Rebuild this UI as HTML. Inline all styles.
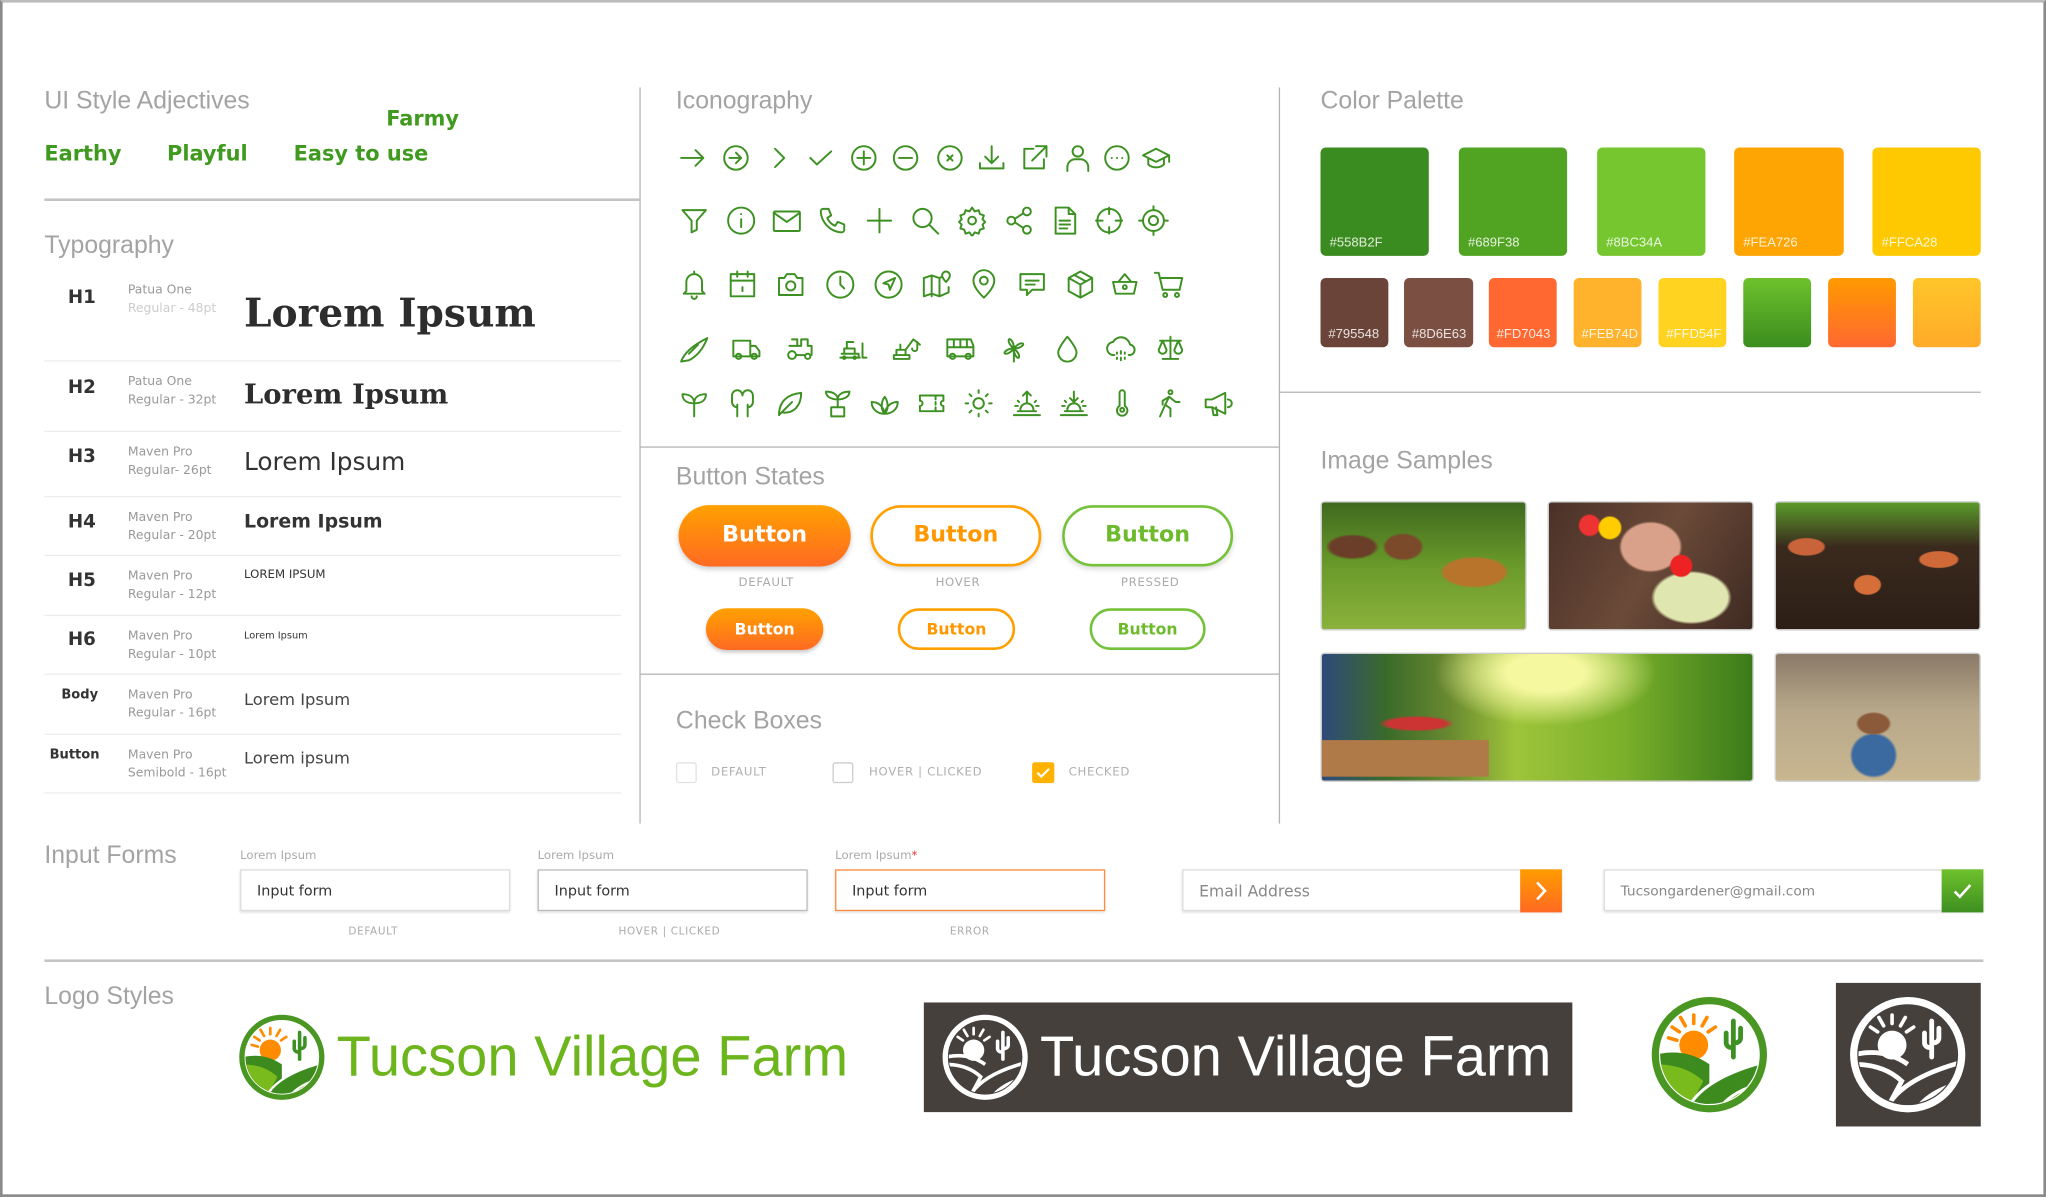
<!DOCTYPE html>
<html><head><meta charset="utf-8">
<style>
*{margin:0;padding:0;box-sizing:border-box}
html,body{width:2046px;height:1197px;overflow:hidden;background:#fff}
#w{position:absolute;left:0;top:0;width:1568px;height:917px;transform:scale(1.30485,1.3053);transform-origin:0 0;font-family:"DejaVu Sans","Liberation Sans",sans-serif}
#fr{position:absolute;left:0;top:0;width:1568px;height:917px;border:2px solid #8a8a8a;border-top-color:#bbb}
.a{position:absolute;white-space:nowrap}
.t{font-family:"Liberation Sans",sans-serif;color:#a3a3a3;font-size:19px}
.adj{font-weight:bold;color:#3f9a1f;font-size:16px}
.hl{position:absolute;background:#b5b5b5;height:1px}
.vl{position:absolute;background:#b5b5b5;width:1px}
.rl{position:absolute;left:34px;width:442px;height:1px;background:#ececec}
.lab{font-weight:bold;color:#333;font-size:14px}
.meta{font-size:9.5px;color:#999;line-height:14px}
.ic{position:absolute;width:24px;height:24px;fill:none;stroke:#3d9122;stroke-width:1.5;stroke-linecap:round;stroke-linejoin:round}
.btn{position:absolute;border-radius:30px;font-weight:bold;text-align:center;font-family:"DejaVu Sans",sans-serif}
.cap{position:absolute;font-size:9px;color:#aaa;letter-spacing:.5px}
.sw{position:absolute;border-radius:4px;color:rgba(255,255,255,.85);font-size:10px;font-family:"Liberation Sans",sans-serif}
.sw span{position:absolute;left:7px;bottom:4px}
.img{position:absolute;border-radius:3px;border:1px solid #ccc}
.inp{position:absolute;height:32px;border:1px solid #ddd;box-shadow:0 1px 2px #ddd;font-size:11px;color:#333;padding-left:12px;line-height:32px;background:#fff}
.il{position:absolute;font-size:9px;color:#aaa}
.lt{position:absolute;white-space:nowrap;font-family:"Liberation Sans",sans-serif;font-size:43px;line-height:56px}
</style></head><body><div id="w">
<div id="fr"></div>
<svg width="0" height="0" style="position:absolute">
<defs>
<clipPath id="cc"><circle cx="50" cy="50" r="41"/></clipPath>
<symbol id="lg" viewBox="0 0 100 100">
<circle cx="50" cy="50" r="45" fill="#fff" stroke="#4a9622" stroke-width="6"/>
<g clip-path="url(#cc)">
<g stroke="#ff8c00" stroke-width="3" stroke-linecap="round"><line x1="37" y1="24" x2="37" y2="17"/><line x1="30" y1="26" x2="26" y2="19"/><line x1="44" y1="26" x2="48" y2="19"/><line x1="25" y1="31" x2="19" y2="27"/><line x1="49" y1="31" x2="55" y2="27"/><line x1="23" y1="38" x2="16" y2="36"/></g>
<circle cx="37" cy="42" r="12" fill="#ff8c00"/>
<path d="M70 22v30M64 32v8a4 4 0 004 4h2M76 28v8a4 4 0 01-4 4h-2" stroke="#3d9122" stroke-width="4" fill="none" stroke-linecap="round"/>
<path d="M5 50q25-6 45 8v50H5z" fill="#3d8a1e"/>
<path d="M5 58q25 0 40 14L30 100H5z" fill="#79bb1c"/>
<path d="M30 100q10-30 70-45v50z" fill="#3d8a1e" stroke="#fff" stroke-width="2.5"/>
<path d="M55 100q10-20 45-28v30z" fill="#79bb1c" stroke="#fff" stroke-width="2.5"/>
</g>
</symbol>
<symbol id="lw" viewBox="0 0 100 100">
<circle cx="50" cy="50" r="45" fill="none" stroke="#fff" stroke-width="6"/>
<g clip-path="url(#cc)" fill="none" stroke="#fff">
<g stroke-width="3" stroke-linecap="round"><line x1="37" y1="24" x2="37" y2="17"/><line x1="30" y1="26" x2="26" y2="19"/><line x1="44" y1="26" x2="48" y2="19"/><line x1="25" y1="31" x2="19" y2="27"/><line x1="49" y1="31" x2="55" y2="27"/></g>
<circle cx="37" cy="42" r="12" fill="#fff" stroke="none"/>
<path d="M70 22v30M64 32v8a4 4 0 004 4h2M76 28v8a4 4 0 01-4 4h-2" stroke-width="4" stroke-linecap="round"/>
<path d="M5 50q25-6 45 8M5 58q25 0 40 14L30 100M30 100q10-30 70-45M55 100q10-20 45-28" stroke-width="4"/>
</g>
</symbol>
</defs></svg>

<div class="a t" style="left:34px;top:67px">UI Style Adjectives</div>
<div class="a adj" style="left:296px;top:81px">Farmy</div>
<div class="a adj" style="left:34px;top:108px">Earthy</div>
<div class="a adj" style="left:128px;top:108px">Playful</div>
<div class="a adj" style="left:225px;top:108px">Easy to use</div>
<div class="hl" style="left:34px;top:152px;width:456px;height:2px;background:#c4c4c4"></div>
<div class="vl" style="left:490px;top:67px;height:564px"></div>
<div class="vl" style="left:980px;top:67px;height:564px"></div>

<div class="a t" style="left:34px;top:178px">Typography</div>
<div class="a lab" style="left:52px;top:220px">H1</div>
<div class="a meta" style="left:98px;top:216px">Patua One<br><span style="color:#ccc">Regular - 48pt</span></div>
<div class="a" style="left:187px;top:223px;font-family:'DejaVu Serif','Liberation Serif',serif;font-weight:bold;font-size:30px;color:#2d2d2d">Lorem Ipsum</div>
<div class="rl" style="top:276px"></div>
<div class="a lab" style="left:52px;top:289px">H2</div>
<div class="a meta" style="left:98px;top:286px">Patua One<br>Regular - 32pt</div>
<div class="a" style="left:187px;top:289px;font-family:'DejaVu Serif','Liberation Serif',serif;font-weight:bold;font-size:21px;color:#2d2d2d">Lorem Ipsum</div>
<div class="rl" style="top:330px"></div>
<div class="a lab" style="left:52px;top:342px">H3</div>
<div class="a meta" style="left:98px;top:340px">Maven Pro<br>Regular- 26pt</div>
<div class="a" style="left:187px;top:343px;font-size:19px;color:#333">Lorem Ipsum</div>
<div class="rl" style="top:380px"></div>
<div class="a lab" style="left:52px;top:392px">H4</div>
<div class="a meta" style="left:98px;top:390px">Maven Pro<br>Regular - 20pt</div>
<div class="a" style="left:187px;top:392px;font-size:14.5px;font-weight:bold;color:#333">Lorem Ipsum</div>
<div class="rl" style="top:425px"></div>
<div class="a lab" style="left:52px;top:437px">H5</div>
<div class="a meta" style="left:98px;top:435px">Maven Pro<br>Regular - 12pt</div>
<div class="a" style="left:187px;top:436px;font-size:9px;color:#333">LOREM IPSUM</div>
<div class="rl" style="top:471px"></div>
<div class="a lab" style="left:52px;top:482px">H6</div>
<div class="a meta" style="left:98px;top:481px">Maven Pro<br>Regular - 10pt</div>
<div class="a" style="left:187px;top:482px;font-size:7.5px;color:#333">Lorem Ipsum</div>
<div class="rl" style="top:516px"></div>
<div class="a lab" style="left:47px;top:527px;font-size:10px">Body</div>
<div class="a meta" style="left:98px;top:526px">Maven Pro<br>Regular - 16pt</div>
<div class="a" style="left:187px;top:528px;font-size:12.5px;color:#444">Lorem Ipsum</div>
<div class="rl" style="top:562px"></div>
<div class="a lab" style="left:38px;top:573px;font-size:10px">Button</div>
<div class="a meta" style="left:98px;top:572px">Maven Pro<br>Semibold - 16pt</div>
<div class="a" style="left:187px;top:573px;font-size:12.5px;color:#444">Lorem ipsum</div>
<div class="rl" style="top:607px"></div>

<div class="a t" style="left:518px;top:67px">Iconography</div>
<svg class="ic" style="left:519px;top:109px" viewBox="0 0 24 24"><path d="M3 12h17M14 6l6 6-6 6"/></svg>
<svg class="ic" style="left:552px;top:109px" viewBox="0 0 24 24"><circle cx="12" cy="12" r="9"/><path d="M7 12h9M12 8l4 4-4 4"/></svg>
<svg class="ic" style="left:585px;top:109px" viewBox="0 0 24 24"><path d="M9 5l7 7-7 7"/></svg>
<svg class="ic" style="left:617px;top:109px" viewBox="0 0 24 24"><path d="M4 12l5 5 11-10"/></svg>
<svg class="ic" style="left:650px;top:109px" viewBox="0 0 24 24"><circle cx="12" cy="12" r="9"/><path d="M12 7v10M7 12h10"/></svg>
<svg class="ic" style="left:682px;top:109px" viewBox="0 0 24 24"><circle cx="12" cy="12" r="9"/><path d="M7 12h10"/></svg>
<svg class="ic" style="left:716px;top:109px" viewBox="0 0 24 24"><circle cx="12" cy="12" r="9"/><path d="M10 10l4 4M14 10l-4 4"/></svg>
<svg class="ic" style="left:748px;top:109px" viewBox="0 0 24 24"><path d="M12 3v13M7 11l5 5 5-5M3 16v4h18v-4"/></svg>
<svg class="ic" style="left:781px;top:109px" viewBox="0 0 24 24"><path d="M11 5H4v15h15v-7M13 3h8v8M21 3L10 14"/></svg>
<svg class="ic" style="left:814px;top:109px" viewBox="0 0 24 24"><circle cx="12" cy="7" r="4"/><path d="M4 22v-3a6 6 0 016-6h4a6 6 0 016 6v3"/></svg>
<svg class="ic" style="left:844px;top:109px" viewBox="0 0 24 24"><circle cx="12" cy="12" r="9"/><path d="M8 12h.1M12 12h.1M16 12h.1"/></svg>
<svg class="ic" style="left:874px;top:109px" viewBox="0 0 24 24"><path d="M2 10l10-5 10 5-10 5zM6 12v5c3 3 9 3 12 0v-5M22 10v5"/></svg>
<svg class="ic" style="left:520px;top:157px" viewBox="0 0 24 24"><path d="M3 4h18l-7 8v7l-4 2v-9z"/></svg>
<svg class="ic" style="left:556px;top:157px" viewBox="0 0 24 24"><circle cx="12" cy="12" r="10"/><path d="M12 11v6M12 7v.1"/></svg>
<svg class="ic" style="left:591px;top:157px" viewBox="0 0 24 24"><rect x="2" y="5" width="20" height="15" rx="1"/><path d="M2 6l10 7 10-7"/></svg>
<svg class="ic" style="left:626px;top:157px" viewBox="0 0 24 24"><path d="M5 3h4l2 5-3 2a11 11 0 006 6l2-3 5 2v4a2 2 0 01-2 2A17 17 0 013 5a2 2 0 012-2z"/></svg>
<svg class="ic" style="left:662px;top:157px" viewBox="0 0 24 24"><path d="M12 3v18M3 12h18"/></svg>
<svg class="ic" style="left:697px;top:157px" viewBox="0 0 24 24"><circle cx="10" cy="10" r="7"/><path d="M15 15l7 7"/></svg>
<svg class="ic" style="left:733px;top:157px" viewBox="0 0 24 24"><circle cx="12" cy="12" r="3"/><path d="M12 2l2 3 3-1 1 3 3 1-1 3 2 2-2 2 1 3-3 1-1 3-3-1-2 3-2-3-3 1-1-3-3-1 1-3-2-2 2-2-1-3 3-1 1-3 3 1z"/></svg>
<svg class="ic" style="left:769px;top:157px" viewBox="0 0 24 24"><circle cx="18" cy="5" r="3"/><circle cx="6" cy="12" r="3"/><circle cx="18" cy="19" r="3"/><path d="M9 10.5l6-4M9 13.5l6 4"/></svg>
<svg class="ic" style="left:804px;top:157px" viewBox="0 0 24 24"><path d="M5 2h10l5 5v15H5zM15 2v5h5M8 12h8M8 15h8M8 18h6"/></svg>
<svg class="ic" style="left:838px;top:157px" viewBox="0 0 24 24"><circle cx="12" cy="12" r="9"/><path d="M12 2v5M12 17v5M2 12h5M17 12h5"/></svg>
<svg class="ic" style="left:872px;top:157px" viewBox="0 0 24 24"><circle cx="12" cy="12" r="8"/><circle cx="12" cy="12" r="3.5"/><path d="M12 1v3M12 20v3M1 12h3M20 12h3"/></svg>
<svg class="ic" style="left:520px;top:206px" viewBox="0 0 24 24"><path d="M6 17V10a6 6 0 0112 0v7l2 2H4zM10 21a2 2 0 004 0M12 2v2"/></svg>
<svg class="ic" style="left:557px;top:206px" viewBox="0 0 24 24"><rect x="3" y="4" width="18" height="17"/><path d="M3 9h18M8 2v4M16 2v4M12 14v3"/></svg>
<svg class="ic" style="left:594px;top:206px" viewBox="0 0 24 24"><path d="M3 7h4l2-3h6l2 3h4v13H3z"/><circle cx="12" cy="13" r="3.5"/></svg>
<svg class="ic" style="left:632px;top:206px" viewBox="0 0 24 24"><circle cx="12" cy="12" r="10"/><path d="M12 6v6l3 3"/></svg>
<svg class="ic" style="left:669px;top:206px" viewBox="0 0 24 24"><circle cx="12" cy="12" r="10"/><path d="M17 7l-9 4 4 1 1 4z"/></svg>
<svg class="ic" style="left:706px;top:206px" viewBox="0 0 24 24"><path d="M2 7l6-2 6 2 2-1M8 5v16M14 7v14M2 7v14l6-2 6 2 7-3v-4"/><path d="M19 2a3 3 0 013 3c0 2-3 5-3 5s-3-3-3-5a3 3 0 013-3z"/></svg>
<svg class="ic" style="left:742px;top:206px" viewBox="0 0 24 24"><path d="M12 22s8-7 8-13a8 8 0 00-16 0c0 6 8 13 8 13z"/><circle cx="12" cy="9" r="3"/></svg>
<svg class="ic" style="left:779px;top:206px" viewBox="0 0 24 24"><path d="M3 4h18v12h-9l-4 4v-4H3zM7 9h10M7 12h7"/></svg>
<svg class="ic" style="left:816px;top:206px" viewBox="0 0 24 24"><path d="M12 2l9 5v10l-9 5-9-5V7zM3 7l9 5 9-5M12 12v10M7 4.5l9 5"/></svg>
<svg class="ic" style="left:850px;top:206px" viewBox="0 0 24 24"><path d="M3 10h18l-2 9H5zM7 10l5-6 5 6"/><circle cx="12" cy="14" r="1.5"/></svg>
<svg class="ic" style="left:884px;top:206px" viewBox="0 0 24 24"><path d="M1 3h3l3 13h13l2-9H6"/><circle cx="9" cy="20" r="1.5"/><circle cx="18" cy="20" r="1.5"/></svg>
<svg class="ic" style="left:520px;top:255px" viewBox="0 0 24 24"><path d="M2 22c2-6 8-12 20-18-3 8-8 14-14 17zM8 16l7-7"/></svg>
<svg class="ic" style="left:560px;top:255px" viewBox="0 0 24 24"><path d="M2 6h13v12H2zM15 10h4l3 4v4h-7"/><circle cx="6" cy="18" r="2"/><circle cx="18" cy="18" r="2"/></svg>
<svg class="ic" style="left:601px;top:255px" viewBox="0 0 24 24"><path d="M4 10h9V5h5v5h3v7M6 5h4v5"/><circle cx="6" cy="17" r="3"/><circle cx="18" cy="18" r="2"/><path d="M9 17h7"/></svg>
<svg class="ic" style="left:642px;top:255px" viewBox="0 0 24 24"><path d="M2 19h15M3 16h13v3M5 16v-4h8v4M7 12V7h5M19 8v11h3"/><circle cx="5" cy="19" r="1"/><circle cx="13" cy="19" r="1"/></svg>
<svg class="ic" style="left:683px;top:255px" viewBox="0 0 24 24"><path d="M2 20h12v-3H2zM4 17v-4h7v4M7 13V9M11 13l6-8 5 4M20 7v5a2 2 0 01-4 0"/></svg>
<svg class="ic" style="left:724px;top:255px" viewBox="0 0 24 24"><path d="M2 5h18l2 5v8H2zM2 11h20M7 5v6M12 5v6M17 5v6"/><circle cx="6" cy="18" r="2"/><circle cx="18" cy="18" r="2"/></svg>
<svg class="ic" style="left:765px;top:255px" viewBox="0 0 24 24"><path d="M12 12C12 6 8 3 8 6s4 6 4 6c6 0 9-4 6-4s-6 4-6 4c0 6 4 9 4 6s-4-6-4-6c-6 0-9 4-6 4s6-4 6-4zM12 12v10"/></svg>
<svg class="ic" style="left:806px;top:255px" viewBox="0 0 24 24"><path d="M12 3s-7 8-7 12a7 7 0 0014 0c0-4-7-12-7-12z"/></svg>
<svg class="ic" style="left:847px;top:255px" viewBox="0 0 24 24"><path d="M7 17a5 5 0 01-1-10 7 7 0 0113 2 4 4 0 01-1 8M12 14v2M12 19v2M9 15v1M15 15v1M9 19v1M15 19v1"/></svg>
<svg class="ic" style="left:885px;top:255px" viewBox="0 0 24 24"><path d="M12 3v17M6 20h12M4 6h16M6 6l-3 7a3 3 0 006 0zM18 6l-3 7a3 3 0 006 0z"/></svg>
<svg class="ic" style="left:520px;top:297px" viewBox="0 0 24 24"><path d="M12 22V12M12 12C12 7 8 5 3 5c0 5 4 7 9 7zM12 12c0-5 4-7 9-7 0 5-4 7-9 7z"/></svg>
<svg class="ic" style="left:557px;top:297px" viewBox="0 0 24 24"><path d="M8 22V13M16 22V13M8 15a4 4 0 01-4-4V6a4 4 0 018 0M12 6a4 4 0 018 0v5a4 4 0 01-4 4"/></svg>
<svg class="ic" style="left:593px;top:297px" viewBox="0 0 24 24"><path d="M4 21c0-10 6-16 17-17 0 10-6 16-14 15M4 21l10-10"/></svg>
<svg class="ic" style="left:630px;top:297px" viewBox="0 0 24 24"><path d="M7 15h10v7H7zM12 15V9M12 9C12 5 8 3 3 3c0 4 4 6 9 6zM12 9c0-4 4-6 9-6 0 4-4 6-9 6z"/></svg>
<svg class="ic" style="left:666px;top:297px" viewBox="0 0 24 24"><path d="M12 20c-5 0-10-3-10-9 5 0 9 3 10 9zM12 20c5 0 10-3 10-9-5 0-9 3-10 9zM12 20c-3-3-3-9 0-13 3 4 3 10 0 13z"/></svg>
<svg class="ic" style="left:702px;top:297px" viewBox="0 0 24 24"><path d="M3 6h18v4a2 2 0 000 4v4H3v-4a2 2 0 000-4zM15 6v3M15 11v2M15 15v3"/></svg>
<svg class="ic" style="left:738px;top:297px" viewBox="0 0 24 24"><circle cx="12" cy="12" r="4"/><path d="M12 2v2M12 20v2M2 12h2M20 12h2M5 5l1.5 1.5M17.5 17.5L19 19M5 19l1.5-1.5M17.5 6.5L19 5"/></svg>
<svg class="ic" style="left:775px;top:297px" viewBox="0 0 24 24"><path d="M2 21h20M5 18h14M7 17a5 5 0 0110 0M12 3v8M9 6l3-3 3 3M3 14h2M19 14h2M5 10l1 1M19 10l-1 1"/></svg>
<svg class="ic" style="left:811px;top:297px" viewBox="0 0 24 24"><path d="M2 21h20M5 18h14M7 17a5 5 0 0110 0M12 3v8M9 8l3 3 3-3M3 14h2M19 14h2M5 10l1 1M19 10l-1 1"/></svg>
<svg class="ic" style="left:848px;top:297px" viewBox="0 0 24 24"><path d="M10 14V4a2 2 0 014 0v10a4 4 0 11-4 0z"/><circle cx="12" cy="17" r="1.5"/></svg>
<svg class="ic" style="left:884px;top:297px" viewBox="0 0 24 24"><circle cx="13" cy="3.5" r="1.5"/><path d="M12 7l-3 6 4 3v6M12 7l5 4h3M9 13l-4 9M12 7l-5 3v3"/></svg>
<svg class="ic" style="left:921px;top:297px" viewBox="0 0 24 24"><path d="M3 9h5l10-5v16L8 15H3zM8 15l1 6h3l-1-6M20 9a3 3 0 010 6"/></svg>

<div class="hl" style="left:490px;top:342px;width:490px"></div>
<div class="a t" style="left:518px;top:355px">Button States</div>
<div class="btn" style="left:520px;top:387px;width:132px;height:47px;line-height:47px;font-size:17px;color:#fff;background:linear-gradient(#ffa100,#ff6a22);box-shadow:0 2px 4px rgba(0,0,0,.2)">Button</div>
<div class="btn" style="left:667px;top:387px;width:131px;height:47px;line-height:43px;font-size:17px;color:#ff9800;border:2px solid #ffa000;box-shadow:0 2px 4px rgba(0,0,0,.15)">Button</div>
<div class="btn" style="left:814px;top:387px;width:131px;height:47px;line-height:43px;font-size:17px;color:#6dbb2d;border:2px solid #75c23a;box-shadow:0 2px 4px rgba(0,0,0,.15)">Button</div>
<div class="cap" style="left:566px;top:442px">DEFAULT</div>
<div class="cap" style="left:717px;top:442px">HOVER</div>
<div class="cap" style="left:859px;top:442px">PRESSED</div>
<div class="btn" style="left:541px;top:466px;width:90px;height:32px;line-height:32px;font-size:12px;color:#fff;background:linear-gradient(#ffa100,#ff6a22);box-shadow:0 2px 3px rgba(0,0,0,.2)">Button</div>
<div class="btn" style="left:688px;top:466px;width:90px;height:32px;line-height:28px;font-size:12px;color:#ff9800;border:2px solid #ffa000">Button</div>
<div class="btn" style="left:835px;top:466px;width:89px;height:32px;line-height:28px;font-size:12px;color:#6dbb2d;border:2px solid #75c23a">Button</div>

<div class="hl" style="left:490px;top:516px;width:490px"></div>
<div class="a t" style="left:518px;top:542px">Check Boxes</div>
<div class="a" style="left:518px;top:584px;width:16px;height:16px;border:1px solid #e2e2e2;border-radius:2px"></div>
<div class="cap" style="left:545px;top:587px;color:#b0b0b0">DEFAULT</div>
<div class="a" style="left:638px;top:584px;width:16px;height:16px;border:1px solid #ccc;border-radius:2px"></div>
<div class="cap" style="left:666px;top:587px;color:#b0b0b0">HOVER | CLICKED</div>
<div class="a" style="left:791px;top:584px;width:17px;height:16px;background:#ffb300;border-radius:2px"><svg width="17" height="16" viewBox="0 0 17 16"><path d="M4 8l3 3 6-6" stroke="#fff" stroke-width="1.6" fill="none"/></svg></div>
<div class="cap" style="left:819px;top:587px;color:#b0b0b0">CHECKED</div>

<div class="a t" style="left:1012px;top:67px">Color Palette</div>
<div class="sw" style="left:1012px;top:113px;width:83px;height:83px;background:#3b8c20"><span>#558B2F</span></div>
<div class="sw" style="left:1118px;top:113px;width:83px;height:83px;background:#51a322"><span>#689F38</span></div>
<div class="sw" style="left:1224px;top:113px;width:83px;height:83px;background:#76c62f"><span>#8BC34A</span></div>
<div class="sw" style="left:1329px;top:113px;width:84px;height:83px;background:#ffa503"><span>#FEA726</span></div>
<div class="sw" style="left:1435px;top:113px;width:83px;height:83px;background:#ffc901"><span>#FFCA28</span></div>
<div class="sw" style="left:1012px;top:213px;width:52px;height:53px;background:#6b4439"><span style="left:6px">#795548</span></div>
<div class="sw" style="left:1076px;top:213px;width:53px;height:53px;background:#7b4f41"><span style="left:6px">#8D6E63</span></div>
<div class="sw" style="left:1141px;top:213px;width:52px;height:53px;background:#ff6831"><span style="left:6px">#FD7043</span></div>
<div class="sw" style="left:1206px;top:213px;width:52px;height:53px;background:#ffb22b"><span style="left:6px">#FEB74D</span></div>
<div class="sw" style="left:1271px;top:213px;width:52px;height:53px;background:#ffd320"><span style="left:6px">#FFD54F</span></div>
<div class="sw" style="left:1336px;top:213px;width:52px;height:53px;background:linear-gradient(#6ec12c,#3b8d1f)"></div>
<div class="sw" style="left:1401px;top:213px;width:52px;height:53px;background:linear-gradient(#ff9a00,#ff6830)"></div>
<div class="sw" style="left:1466px;top:213px;width:52px;height:53px;background:linear-gradient(#ffc62a,#ffab28)"></div>
<div class="hl" style="left:980px;top:300px;width:538px"></div>

<div class="a t" style="left:1012px;top:343px">Image Samples</div>
<div class="img" style="left:1012px;top:384px;width:158px;height:99px;background:radial-gradient(ellipse at 75% 55%,#b8742a 0 14%,transparent 16%),radial-gradient(ellipse at 40% 35%,#7a4a2a 0 10%,transparent 12%),radial-gradient(ellipse at 15% 35%,#6a3e28 0 9%,transparent 11%),linear-gradient(#3f6a1f,#6a9a2a 50%,#8ab23c)"></div>
<div class="img" style="left:1186px;top:384px;width:158px;height:99px;background:radial-gradient(circle at 30% 20%,#ffcc00 0 6%,transparent 7%),radial-gradient(circle at 20% 18%,#e33 0 5%,transparent 6%),radial-gradient(circle at 65% 50%,#e22 0 7%,transparent 8%),radial-gradient(ellipse at 70% 75%,#dfe6b0 0 18%,transparent 20%),radial-gradient(ellipse at 50% 35%,#d9a08a 0 20%,transparent 22%),linear-gradient(120deg,#4a3128,#6b4a38 50%,#3e2a22)"></div>
<div class="img" style="left:1360px;top:384px;width:158px;height:99px;background:radial-gradient(ellipse at 45% 65%,#d66e3a 0 8%,transparent 9%),radial-gradient(ellipse at 80% 45%,#cf6a38 0 8%,transparent 9%),radial-gradient(ellipse at 15% 35%,#c9643a 0 7%,transparent 8%),linear-gradient(#5b9a2a,#3a2a1e 35%,#2c1e16)"></div>
<div class="img" style="left:1012px;top:500px;width:332px;height:99px;background:radial-gradient(ellipse at 22% 55%,#c33 0 6%,transparent 8%),radial-gradient(ellipse at 52% 15%,#f6f8a0 0 12%,transparent 35%),linear-gradient(90deg,#2e4a7a 0,#3a6a2a 15%,#6a8a30 30%,#9ec43a 45%,#7ab02a 70%,#3a7a1a)"></div>
<div class="a" style="left:1013px;top:567px;width:128px;height:28px;background:#b07a48"></div>
<div class="img" style="left:1360px;top:500px;width:158px;height:99px;background:radial-gradient(ellipse at 48% 55%,#8a5a3a 0 10%,transparent 12%),radial-gradient(ellipse at 48% 80%,#3a6aa0 0 14%,transparent 16%),linear-gradient(#8a7a68,#b8a88a 45%,#c8b690)"></div>

<div class="a t" style="left:34px;top:645px">Input Forms</div>
<div class="il" style="left:184px;top:651px">Lorem Ipsum</div>
<div class="il" style="left:412px;top:651px">Lorem Ipsum</div>
<div class="il" style="left:640px;top:651px">Lorem Ipsum<span style="color:#e33">*</span></div>
<div class="inp" style="left:184px;top:666px;width:207px">Input form</div>
<div class="inp" style="left:412px;top:666px;width:207px;border-color:#bbb">Input form</div>
<div class="inp" style="left:640px;top:666px;width:207px;border-color:#ff8a3a">Input form</div>
<div class="cap" style="left:267px;top:709px;font-size:8px">DEFAULT</div>
<div class="cap" style="left:474px;top:709px;font-size:8px">HOVER | CLICKED</div>
<div class="cap" style="left:728px;top:709px;font-size:8px">ERROR</div>
<div class="inp" style="left:906px;top:666px;width:291px;color:#888;font-size:12px">Email Address</div>
<div class="a" style="left:1165px;top:666px;width:32px;height:33px;background:linear-gradient(#ff9c00,#ff6a22)"><svg width="32" height="33" viewBox="0 0 32 33"><path d="M13 10l6 6.5-6 6.5" stroke="#fff" stroke-width="2" fill="none"/></svg></div>
<div class="inp" style="left:1229px;top:666px;width:291px;color:#888;font-size:10.5px">Tucsongardener@gmail.com</div>
<div class="a" style="left:1488px;top:666px;width:32px;height:33px;background:linear-gradient(#6fc12c,#3d8f20)"><svg width="32" height="33" viewBox="0 0 32 33"><path d="M10 17l4 4 8-9" stroke="#fff" stroke-width="2" fill="none"/></svg></div>
<div class="hl" style="left:34px;top:735px;width:1486px;height:2px;background:#c4c4c4"></div>

<div class="a t" style="left:34px;top:753px">Logo Styles</div>
<svg class="a" style="left:182px;top:776px" width="68" height="68"><use href="#lg"/></svg>
<div class="lt" style="left:258px;top:782px;color:#6db51c">Tucson Village Farm</div>
<div class="a" style="left:708px;top:768px;width:497px;height:84px;background:#46403d"></div>
<svg class="a" style="left:721px;top:776px" width="68" height="68"><use href="#lw"/></svg>
<div class="lt" style="left:797px;top:782px;color:#fff">Tucson Village Farm</div>
<svg class="a" style="left:1264px;top:762px" width="92" height="92"><use href="#lg"/></svg>
<div class="a" style="left:1407px;top:753px;width:111px;height:110px;background:#46403d"></div>
<svg class="a" style="left:1416px;top:762px" width="92" height="92"><use href="#lw"/></svg>
</div></body></html>
